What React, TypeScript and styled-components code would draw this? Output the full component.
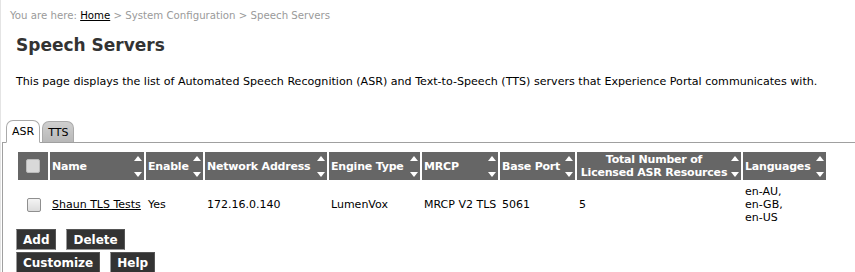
import styled, { createGlobalStyle } from "styled-components";

const GlobalStyle = createGlobalStyle`
    body {
        margin: 0;
        background: #fff;
        font-family: "DejaVu Sans", Verdana, sans-serif;
    }
`;

const columns = [
    { label: "Name", width: 94 },
    { label: "Enable", width: 57 },
    { label: "Network Address", width: 122 },
    { label: "Engine Type", width: 91 },
    { label: "MRCP", width: 76 },
    { label: "Base Port", width: 75 },
    { label: "Total Number of Licensed ASR Resources", width: 164, center: true },
    { label: "Languages", width: 83 },
];

function SortArrows() {
    return <Arrows>
        <svg width="8" height="5" viewBox="0 0 8 5"><path d="M0 5 L4 0 L8 5 Z" fill="#fff"/></svg>
        <svg width="8" height="5" viewBox="0 0 8 5"><path d="M0 0 L4 5 L8 0 Z" fill="#fff"/></svg>
    </Arrows>;
}

function App() {
    return <>
        <GlobalStyle/>
        <Page>
            <Breadcrumb>
                You are here: <HomeLink href="#">Home</HomeLink> &gt; System Configuration &gt; Speech Servers
            </Breadcrumb>
            <Title>Speech Servers</Title>
            <Intro>
                This page displays the list of Automated Speech Recognition (ASR) and Text-to-Speech (TTS) servers that Experience Portal communicates with.
            </Intro>
            <Tabs>
                <Tab active>ASR</Tab>
                <Tab>TTS</Tab>
            </Tabs>
            <Panel>
                <Table>
                    <thead>
                        <tr>
                            <HeadCell width={30} center>
                                <Check dark/>
                            </HeadCell>
                            {columns.map(c =>
                                <HeadCell key={c.label} width={c.width} center={c.center}>
                                    <HeadInner>
                                        <HeadLabel center={c.center}>
                                            {c.center ? <>Total Number of<br/>Licensed ASR Resources</> : c.label}
                                        </HeadLabel>
                                        <SortArrows/>
                                    </HeadInner>
                                </HeadCell>
                            )}
                        </tr>
                    </thead>
                    <tbody>
                        <tr>
                            <Cell center><Check/></Cell>
                            <Cell><RowLink href="#">Shaun TLS Tests</RowLink></Cell>
                            <Cell>Yes</Cell>
                            <Cell>172.16.0.140</Cell>
                            <Cell>LumenVox</Cell>
                            <Cell>MRCP V2 TLS</Cell>
                            <Cell>5061</Cell>
                            <Cell>5</Cell>
                            <Cell>en-AU,<br/>en-GB,<br/>en-US</Cell>
                        </tr>
                    </tbody>
                </Table>
                <ButtonRow>
                    <Button>Add</Button>
                    <Button>Delete</Button>
                </ButtonRow>
                <ButtonRow>
                    <Button>Customize</Button>
                    <Button>Help</Button>
                </ButtonRow>
            </Panel>
        </Page>
    </>;
}

export default App;

export const Page = styled.div`
    width: 855px;
    height: 272px;
    overflow: hidden;
    border-left: 1px solid #e4e4e4;
    box-sizing: border-box;
`;

export const Breadcrumb = styled.div`
    padding: 9px 0 0 9px;
    font-size: 10.2px;
    line-height: 14px;
    color: #9a9a9a;
`;

export const HomeLink = styled.a`
    color: #000;
    text-decoration: underline;
`;

export const Title = styled.h1`
    margin: 12px 0 0 15px;
    font-size: 17px;
    line-height: 21px;
    font-weight: bold;
    color: #333;
`;

export const Intro = styled.p`
    margin: 19px 0 0 15px;
    font-size: 11.1px;
    line-height: 14px;
    color: #000;
`;

export const Tabs = styled.div`
    display: flex;
    gap: 2px;
    margin: 30px 0 0 5px;
    align-items: flex-end;
    height: 23px;
`;

export const Tab = styled.div<{ active?: boolean }>`
    height: ${p => p.active ? "23px" : "21px"};
    box-sizing: border-box;
    padding: 0 5px;
    display: flex;
    align-items: center;
    font-size: 11px;
    color: #000;
    border: 1px solid #aaa;
    border-bottom: ${p => p.active ? "1px solid #fff" : "none"};
    border-radius: 7px 7px 0 0;
    background: ${p => p.active ? "#fff" : "linear-gradient(#cfcfcf, #b8b8b8)"};
    margin-bottom: ${p => p.active ? "-1px" : "0"};
    position: relative;
    z-index: 1;
`;

export const Panel = styled.div`
    margin-left: 1px;
    border-top: 1px solid #a0a0a0;
    border-left: 1px solid #a0a0a0;
    padding: 7px 0 0 13px;
`;

export const Table = styled.table`
    border-spacing: 2px;
    border-collapse: separate;
    font-size: 11px;
`;

export const HeadCell = styled.th<{ width: number; center?: boolean }>`
    width: ${p => p.width}px;
    min-width: ${p => p.width}px;
    max-width: ${p => p.width}px;
    box-sizing: border-box;
    height: 28px;
    padding: 0;
    background: #666;
    color: #fff;
    font-weight: bold;
    text-align: ${p => p.center ? "center" : "left"};
    vertical-align: middle;
`;

export const HeadInner = styled.div`
    display: flex;
    align-items: stretch;
    height: 28px;
`;

export const HeadLabel = styled.span<{ center?: boolean }>`
    flex: 1;
    display: flex;
    align-items: center;
    justify-content: ${p => p.center ? "center" : "flex-start"};
    text-align: ${p => p.center ? "center" : "left"};
    padding-left: 2px;
    white-space: nowrap;
    line-height: 13px;
    letter-spacing: -0.2px;
`;

export const Arrows = styled.span`
    display: flex;
    flex-direction: column;
    justify-content: space-between;
    padding: 4px 2px 3px 2px;
`;

export const Cell = styled.td<{ center?: boolean }>`
    padding: 3px 0 3px 2px;
    text-align: ${p => p.center ? "center" : "left"};
    vertical-align: middle;
    line-height: 13px;
    color: #000;
    white-space: nowrap;
`;

export const RowLink = styled.a`
    color: #000;
    text-decoration: underline;
`;

export const Check = styled.span<{ dark?: boolean }>`
    display: inline-block;
    width: 12px;
    height: 12px;
    border: 1px solid ${p => p.dark ? "#bbb" : "#8f8f8f"};
    border-radius: 2px;
    background: ${p => p.dark ? "#d9d9d9" : "linear-gradient(#f4f4f4, #dcdcdc)"};
    vertical-align: middle;
`;

export const ButtonRow = styled.div`
    display: flex;
    gap: 10px;
    margin-bottom: 2px;
`;

export const Button = styled.button`
    height: 21px;
    padding: 0 6px;
    background: #333;
    color: #fff;
    font-family: "DejaVu Sans", Verdana, sans-serif;
    font-size: 12px;
    font-weight: bold;
    border: 1px solid #999;
    border-top-color: #555;
    border-right-color: #555;
`;
